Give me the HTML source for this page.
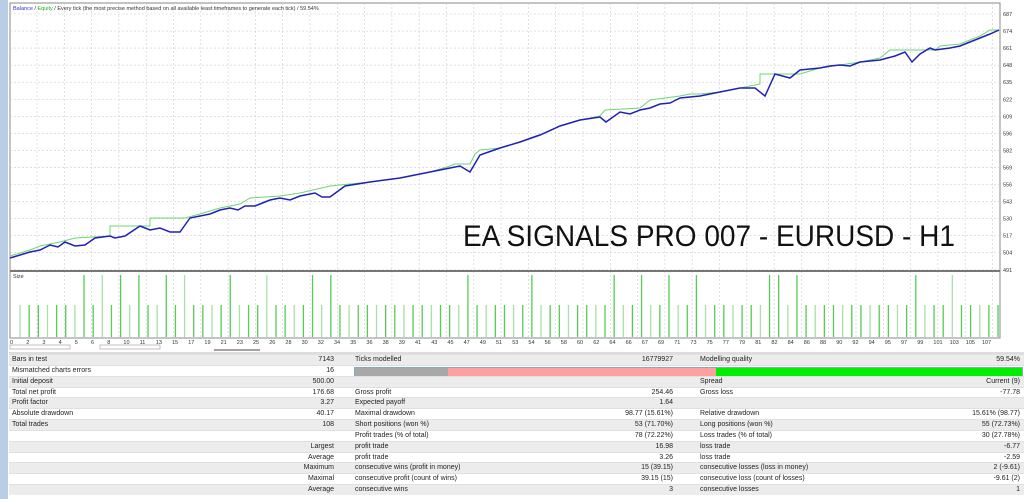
<!DOCTYPE html>
<html><head><meta charset="utf-8"><style>
body{margin:0;width:1024px;height:499px;overflow:hidden;background:#fff;font-family:"Liberation Sans",sans-serif;position:relative}
.strip{position:absolute;left:0;top:0;width:8px;height:499px;background:#b9cde5}
.t{position:absolute;left:9px;top:354px;width:1015px;font-size:7px;color:#222}
.r{height:10.85px;line-height:10.85px;position:relative;border-top:1px solid #e0e0e0;box-sizing:border-box}
.g{background:#ececec}.w{background:#fff}
.r span{position:absolute;white-space:nowrap}
.a{left:3px}.b{right:690px}.c{left:346px}.d{right:351px}.e{left:691px}.f{right:4px}
</style></head><body>
<div class="strip"></div>
<svg width="1024" height="354" style="position:absolute;left:0;top:0" font-family="Liberation Sans, sans-serif">
<rect x="9" y="0" width="1015" height="354" fill="#fff"/>
<rect x="10" y="3" width="990" height="335" fill="#fff" stroke="#888" stroke-width="1"/>
<g stroke="#ccc" stroke-dasharray="2,2" stroke-width="0.6" id="grid"></g>
<line x1="10" y1="271" x2="1000" y2="271" stroke="#777" stroke-width="2"/>
<text x="13" y="10" font-size="5.5" fill="#333"><tspan fill="#3030d0">Balance</tspan> / <tspan fill="#20b020">Equity</tspan> / Every tick (the most precise method based on all available least timeframes to generate each tick) / 59.54%</text>
<text x="13" y="278" font-size="5.5" fill="#333">Size</text>
<g id="lab" font-size="5.5" fill="#333"></g>
<polyline fill="none" stroke="#6fd66f" stroke-width="1" points="10,256 30,250 40,246 60,242 75,238 110,236 110,226 150,226 150,218 185,218 200,214 220,208 240,204 250,198 280,196 300,193 330,186 370,182 400,178 430,172 450,166 455,164 470,164 475,154 480,150 500,148 520,142 530,138 545,133 560,126 580,120 600,116 605,110 640,108 650,100 665,98 680,96 690,94 700,94 720,92 740,88 760,84 760,74 800,74 820,68 840,65 860,62 880,58 890,50 935,50 940,46 960,44 980,36 990,30 999,30"/>
<polyline fill="none" stroke="#2020b8" stroke-width="1.5" points="10,258 20,255 30,252 40,250 50,245 58,247 65,242 75,246 85,245 95,238 110,236 115,238 125,236 140,226 150,230 160,228 170,232 180,232 190,218 210,214 220,210 230,208 238,210 245,206 255,206 260,204 270,200 280,198 290,200 300,196 315,193 322,197 330,197 345,186 370,182 400,178 430,172 450,168 460,166 470,172 480,155 500,148 520,142 540,135 560,126 580,120 600,117 606,122 620,112 630,114 640,110 650,108 660,104 670,103 680,98 700,96 720,92 740,88 755,88 765,96 775,74 790,78 800,70 820,68 830,66 840,65 850,66 860,62 880,60 895,56 905,52 912,62 920,54 930,48 935,50 950,48 960,46 970,42 990,34 999,30"/>
<text x="463" y="246" font-size="29.5" fill="#111" textLength="492" lengthAdjust="spacingAndGlyphs">EA SIGNALS PRO 007 - EURUSD - H1</text>
<g id="bars"></g>
<rect x="10" y="345" width="60" height="4" fill="none" stroke="#999" stroke-width="0.6"/>
<rect x="100" y="345" width="60" height="4" fill="none" stroke="#999" stroke-width="0.6"/>
<line x1="214" y1="350" x2="260" y2="350" stroke="#444" stroke-width="1"/>
<line x1="9" y1="353" x2="1024" y2="353" stroke="#bbb"/>
</svg>
<div class="t">
<div class="r g"><span class="a">Bars in test</span><span class="b">7143</span><span class="c">Ticks modelled</span><span class="d">16779927</span><span class="e">Modelling quality</span><span class="f">59.54%</span></div>
<div class="r w"><span class="a">Mismatched charts errors</span><span class="b">16</span><span style="left:345px;top:1px;height:8px;width:667px;display:flex;border:1px solid #8ab"><i style="width:93px;background:#a8a8a8"></i><i style="width:268px;background:#ffa0a0"></i><i style="flex:1;background:#00ee00"></i></span></div>
<div class="r g"><span class="a">Initial deposit</span><span class="b">500.00</span><span class="e">Spread</span><span class="f">Current (9)</span></div>
<div class="r w"><span class="a">Total net profit</span><span class="b">176.68</span><span class="c">Gross profit</span><span class="d">254.46</span><span class="e">Gross loss</span><span class="f">-77.78</span></div>
<div class="r g"><span class="a">Profit factor</span><span class="b">3.27</span><span class="c">Expected payoff</span><span class="d">1.64</span></div>
<div class="r w"><span class="a">Absolute drawdown</span><span class="b">40.17</span><span class="c">Maximal drawdown</span><span class="d">98.77 (15.61%)</span><span class="e">Relative drawdown</span><span class="f">15.61% (98.77)</span></div>
<div class="r g"><span class="a">Total trades</span><span class="b">108</span><span class="c">Short positions (won %)</span><span class="d">53 (71.70%)</span><span class="e">Long positions (won %)</span><span class="f">55 (72.73%)</span></div>
<div class="r w"><span class="c">Profit trades (% of total)</span><span class="d">78 (72.22%)</span><span class="e">Loss trades (% of total)</span><span class="f">30 (27.78%)</span></div>
<div class="r g"><span class="b">Largest</span><span class="c">profit trade</span><span class="d">16.98</span><span class="e">loss trade</span><span class="f">-6.77</span></div>
<div class="r w"><span class="b">Average</span><span class="c">profit trade</span><span class="d">3.26</span><span class="e">loss trade</span><span class="f">-2.59</span></div>
<div class="r g"><span class="b">Maximum</span><span class="c">consecutive wins (profit in money)</span><span class="d">15 (39.15)</span><span class="e">consecutive losses (loss in money)</span><span class="f">2 (-9.61)</span></div>
<div class="r w"><span class="b">Maximal</span><span class="c">consecutive profit (count of wins)</span><span class="d">39.15 (15)</span><span class="e">consecutive loss (count of losses)</span><span class="f">-9.61 (2)</span></div>
<div class="r g"><span class="b">Average</span><span class="c">consecutive wins</span><span class="d">3</span><span class="e">consecutive losses</span><span class="f">1</span></div>
</div>
<script>
var ns="http://www.w3.org/2000/svg";
function el(t,a,p){var e=document.createElementNS(ns,t);for(var k in a)e.setAttribute(k,a[k]);p.appendChild(e);return e;}
var g=document.getElementById('grid'),lab=document.getElementById('lab'),bars=document.getElementById('bars');
for(var x=37;x<1000;x+=27.3)el('line',{x1:x,y1:3,x2:x,y2:338},g);
var p=687;
for(var i=0;i<16;i++){var y=14+i*17.05;el('line',{x1:10,y1:y,x2:1000,y2:y},g);var t=el('text',{x:1003,y:y+2},lab);t.textContent=Math.round(p-i*13.07);}
var tall=[7,9,11,13,16,18,23,27,32,34,49,56,65,68,71,74,82,83,85,98,102];
for(var i=0;i<=107;i++){var x=20+i*9.14;var tl=tall.indexOf(i)>=0;el('rect',{x:x-0.6,y:tl?275:305,width:1.3,height:tl?62:32,fill:i%3==0?'#a8e0a8':'#55cc55'},bars);}
var nums=[0,2,3,4,5,6,8,10,11,13,15,17,19,21,23,25,26,28,30,32,34,35,36,38,39,41,43,45,47,49,51,53,54,56,58,60,62,64,66,67,69,71,73,75,77,79,81,82,84,86,88,90,92,94,95,97,99,101,103,105,107];
for(var i=0;i<nums.length;i++){var t=el('text',{x:10+i*16.2,y:344},lab);t.textContent=nums[i];}
</script>
</body></html>
